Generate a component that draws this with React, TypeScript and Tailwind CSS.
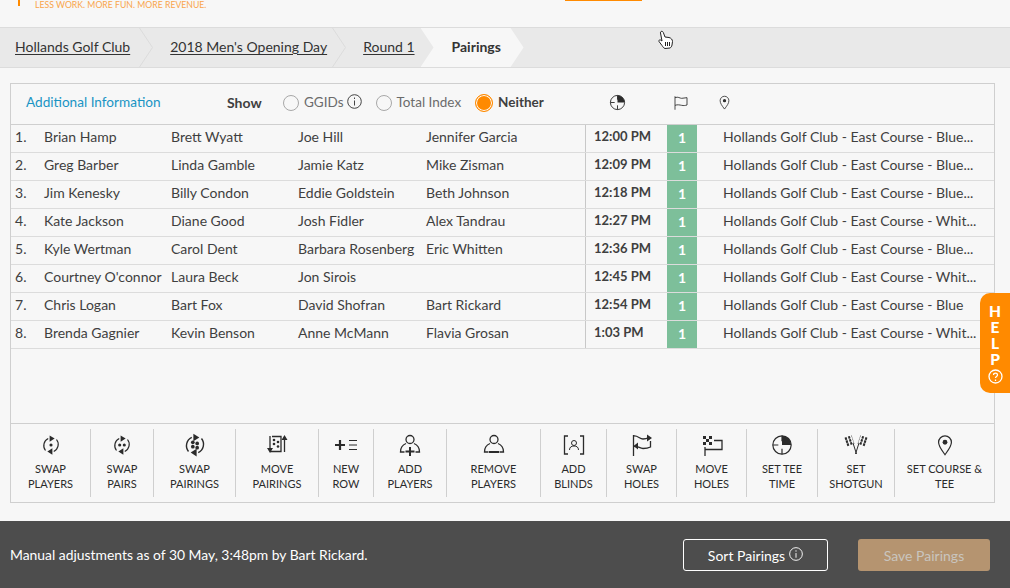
import type { ReactNode } from "react";

const rows = [
  ["Brian Hamp", "Brett Wyatt", "Joe Hill", "Jennifer Garcia", "12:00 PM", "Hollands Golf Club - East Course - Blue..."],
  ["Greg Barber", "Linda Gamble", "Jamie Katz", "Mike Zisman", "12:09 PM", "Hollands Golf Club - East Course - Blue..."],
  ["Jim Kenesky", "Billy Condon", "Eddie Goldstein", "Beth Johnson", "12:18 PM", "Hollands Golf Club - East Course - Blue..."],
  ["Kate Jackson", "Diane Good", "Josh Fidler", "Alex Tandrau", "12:27 PM", "Hollands Golf Club - East Course - Whit..."],
  ["Kyle Wertman", "Carol Dent", "Barbara Rosenberg", "Eric Whitten", "12:36 PM", "Hollands Golf Club - East Course - Blue..."],
  ["Courtney O'connor", "Laura Beck", "Jon Sirois", "", "12:45 PM", "Hollands Golf Club - East Course - Whit..."],
  ["Chris Logan", "Bart Fox", "David Shofran", "Bart Rickard", "12:54 PM", "Hollands Golf Club - East Course - Blue"],
  ["Brenda Gagnier", "Kevin Benson", "Anne McMann", "Flavia Grosan", "1:03 PM", "Hollands Golf Club - East Course - Whit..."],
];

function Svg({ children, size = 24 }: { children: ReactNode; size?: number }) {
  return (
    <svg width={size} height={size} viewBox="0 0 24 24" fill="none" stroke="#2b2b2b" strokeWidth="1.3">
      {children}
    </svg>
  );
}

function SwapIcon({ dots, size }: { dots: number[][]; size: number }) {
  return (
    <Svg size={size}>
      <path d="M9 5A8.500 8.500 0 0 0 6 18" />
      <path d="M15 19A8.500 8.500 0 0 0 18 6" />
      <path d="M10.500 1.500 16 5l-5.500 3.500Z" fill="#2b2b2b" stroke="none" />
      <path d="M13.500 15.500 8 19l5.500 3.500Z" fill="#2b2b2b" stroke="none" />
      {dots.map(([x, y], i) => (
        <circle key={i} cx={x} cy={y} r="1.700" fill="#2b2b2b" stroke="none" />
      ))}
    </Svg>
  );
}

function PieIcon({ size = 24 }: { size?: number }) {
  return (
    <Svg size={size}>
      <circle cx="12" cy="12" r="10" />
      <path d="M12 2v6M2 12h6M12 22v-6" />
      <path d="M12 2a10 10 0 0 1 10 10H12Z" fill="#2b2b2b" stroke="none" />
    </Svg>
  );
}

function PinIcon({ size = 24 }: { size?: number }) {
  return (
    <Svg size={size}>
      <path d="M12 22.500C8 17 5 13.500 5 9a7 7 0 0 1 14 0c0 4.500-3 8-7 13.500Z" />
      <circle cx="12" cy="9" r="2.600" fill="#2b2b2b" stroke="none" />
    </Svg>
  );
}

function PersonIcon({ mark }: { mark: "plus" | "minus" }) {
  return (
    <Svg>
      <circle cx="12" cy="6.500" r="4" />
      <path d="M8 10.500C4 12 2.500 15 2.500 19h4M16 10.500c4 1.500 5.500 4.500 5.500 8.500h-4" />
      {mark === "plus" ? <path d="M12 14v9M7.500 18.500h9" strokeWidth="2" /> : <path d="M7 19h10" strokeWidth="2" />}
    </Svg>
  );
}

const tools: { w: number; top: string; bottom: string; icon: ReactNode }[] = [
  { w: 80, top: "Swap", bottom: "Players", icon: <SwapIcon size={22} dots={[[12, 12]]} /> },
  { w: 63, top: "Swap", bottom: "Pairs", icon: <SwapIcon size={22} dots={[[9.500, 12], [14.500, 12]]} /> },
  { w: 82, top: "Swap", bottom: "Pairings", icon: <SwapIcon size={26} dots={[[10, 9.500], [14, 10.500], [10, 13.500], [14, 14.500]]} /> },
  {
    w: 83, top: "Move", bottom: "Pairings",
    icon: (
      <Svg>
        <path d="M7 3.500h9v15H5" />
        <path d="M5 3v15M19.500 6v13" />
        <path d="M2 15h6l-3 5ZM16.500 7h6l-3-5Z" fill="#2b2b2b" stroke="none" />
        <circle cx="9" cy="7" r="1.300" fill="#2b2b2b" stroke="none" />
        <circle cx="13" cy="9" r="1.300" fill="#2b2b2b" stroke="none" />
        <circle cx="9" cy="11" r="1.300" fill="#2b2b2b" stroke="none" />
        <circle cx="13" cy="13.500" r="1.300" fill="#2b2b2b" stroke="none" />
      </Svg>
    ),
  },
  {
    w: 55, top: "New", bottom: "Row",
    icon: (
      <Svg>
        <path d="M1 12h10M6 7v10" strokeWidth="2.200" />
        <path d="M15 7.500h8M15 12h8M15 16.500h8" strokeWidth="1" />
      </Svg>
    ),
  },
  { w: 73, top: "Add", bottom: "Players", icon: <PersonIcon mark="plus" /> },
  { w: 94, top: "Remove", bottom: "Players", icon: <PersonIcon mark="minus" /> },
  {
    w: 66, top: "Add", bottom: "Blinds",
    icon: (
      <Svg>
        <path d="M6 3H2.500v18H6M18 3h3.500v18H18" />
        <circle cx="12" cy="10" r="2.500" strokeWidth="1" />
        <path d="M7.500 17c0-3 2-4 4.500-4s4.500 1 4.500 4" strokeWidth="1" />
      </Svg>
    ),
  },
  {
    w: 70, top: "Swap", bottom: "Holes",
    icon: (
      <Svg>
        <path d="M3.500 2v21" />
        <path d="M3.500 3c4-1 6 3 9.500 3 2.500 0 4-.5 6-1.500M20.500 8v6c-2 1-5 1.500-7.500 1.500-3.500 0-5-3-9.500-2" />
        <path d="M17 1.500 22 5l-5 3.500ZM8 9.500 3.500 13 8 16.500Z" fill="#2b2b2b" stroke="none" />
      </Svg>
    ),
  },
  {
    w: 70, top: "Move", bottom: "Holes",
    icon: (
      <Svg>
        <path d="M5 14v9" />
        <path d="M14 7.500h8v9H5" />
        <path d="M3 3h3v3H3ZM9 3h3v3H9ZM3 9h3v3H3ZM9 9h3v3H9ZM6 6h3v3H6Z" fill="#2b2b2b" stroke="none" />
      </Svg>
    ),
  },
  { w: 71, top: "Set Tee", bottom: "Time", icon: <PieIcon size={22} /> },
  {
    w: 77, top: "Set", bottom: "Shotgun",
    icon: (
      <Svg>
        <path d="M9 10 12.500 21M15 10 11.500 21" strokeWidth="1" />
        <path d="M1 6 8 3.500M2 9 9 6.500M3 12 10 9.500M23 6 16 3.500M22 9 15 6.500M21 12 14 9.500" strokeWidth="2.600" strokeDasharray="2 1.500" />
      </Svg>
    ),
  },
  { w: 99, top: "Set Course &", bottom: "Tee", icon: <PinIcon size={22} /> },
];

function Crumb({ children }: { children: ReactNode }) {
  return (
    <div className="flex h-full items-center pb-[2px]">
      <a className="underline underline-offset-2 whitespace-nowrap">{children}</a>
    </div>
  );
}

function Chevron() {
  return (
    <svg width="14" height="39" viewBox="0 0 14 39" fill="none" stroke="#dcdcdc" className="shrink-0">
      <path d="M0.500 0 13.500 19.500 0.500 39" />
    </svg>
  );
}

function Radio({ label, info }: { label: string; info?: boolean }) {
  return (
    <label className="flex items-center text-[#6b6b6b]">
      <span className="w-4 h-4 mr-[5px] rounded-full border border-[#a8a8a8]" />
      {label}
      {info && (
        <svg width="15" height="15" viewBox="0 0 15 15" fill="none" stroke="#444" className="-mt-[3px] ml-[3px]">
          <circle cx="7.500" cy="7.500" r="6.800" />
          <path d="M7.500 6.500v5M7.500 3.500v1.500" />
        </svg>
      )}
    </label>
  );
}

export default function App() {
  return (
    <div className="relative h-[588px] overflow-hidden bg-[#f7f7f7] text-[14px] text-[#3f3f3f] font-['Lato','Liberation_Sans',sans-serif] flex flex-col">
      {/* header, scrolled mostly out of view */}
      <header className="relative h-[28px] shrink-0 border-b border-[#dcdcdc]">
        <span className="absolute left-[18px] top-0 w-[2px] h-[6px] bg-[#ff8a00]" />
        <span className="absolute left-[35px] -top-px text-[8.700px] leading-[12px] text-[#f9a54c] whitespace-nowrap">
          LESS WORK. MORE FUN. MORE REVENUE.
        </span>
        <span className="absolute left-[565px] top-0 w-[77px] h-px bg-[#ff8a00]" />
      </header>

      <nav className="h-[40px] shrink-0 flex items-center bg-[#e9e9e9] border-b border-[#dcdcdc] pl-[15px] text-[#333]">
        <Crumb>Hollands Golf Club</Crumb>
        <div className="ml-[9px] mr-[17px] flex"><Chevron /></div>
        <Crumb>2018 Men's Opening Day</Crumb>
        <div className="ml-[5px] mr-[17px] flex"><Chevron /></div>
        <Crumb>Round 1</Crumb>
        <div className="ml-[6px] h-full w-[103px] flex items-center pl-[31px] pb-[2px] bg-[#f7f7f7] font-bold [clip-path:polygon(0_0,calc(100%-13px)_0,100%_50%,calc(100%-13px)_100%,0_100%,13px_50%)]">
          Pairings
        </div>
      </nav>

      <main className="mt-[15px] mx-[10px] w-[985px] h-[420px] shrink-0 border border-[#cfcfcf] flex flex-col">
        <div className="h-[41px] shrink-0 flex items-center border-b border-[#cfcfcf] pl-[15px] pb-[3px] text-[13.500px]">
          <a className="w-[201px] text-[#1a94c4] text-[13.600px]">Additional Information</a>
          <span className="w-[56px] font-bold text-[14px]">Show</span>
          <div className="flex items-center gap-[14px]">
            <Radio label="GGIDs" info />
            <Radio label="Total Index" />
            <label className="flex items-center gap-[5px] font-bold">
              <span className="w-[18px] h-[18px] rounded-full border border-[#ff8a00] bg-[#ff8a00] shadow-[inset_0_0_0_1px_#fff]" />
              Neither
            </label>
          </div>
          <div className="ml-[65px] flex items-center">
            <PieIcon size={17} />
            <div className="ml-[47px]">
              <Svg size={16}>
                <path d="M3 2v20" strokeWidth="2" stroke="#777" />
                <path d="M3 4c5-2 7 1 10 1l8-1v11c-3 1-5 1-8 .5s-6-1.500-10 0" />
              </Svg>
            </div>
            <div className="ml-[28px]">
              <PinIcon size={15} />
            </div>
          </div>
        </div>

        <div className="flex-1">
          {rows.map((r, i) => (
            <div
              key={i}
              className="h-[28px] border-b border-[#dcdcdc] grid grid-cols-[29px_127px_127px_128px_159px_82px_30px_1fr] items-center pl-[4px]"
            >
              <span className="mb-[4px]">{i + 1}.</span>
              <span className="mb-[4px] whitespace-nowrap">{r[0]}</span>
              <span className="mb-[4px] whitespace-nowrap">{r[1]}</span>
              <span className="mb-[4px] whitespace-nowrap">{r[2]}</span>
              <span className="mb-[4px] whitespace-nowrap">{r[3]}</span>
              <span className="h-full flex items-center pl-[8px] pb-[3px] border-l border-[#c8c8c8] font-bold text-[13px]">{r[4]}</span>
              <span className="h-full flex items-center justify-center pb-[3px] bg-[#7dbf9a] text-white font-bold">1</span>
              <span className="mb-[4px] pl-[26px] whitespace-nowrap overflow-hidden">{r[5]}</span>
            </div>
          ))}
        </div>

        <div className="h-[79px] shrink-0 border-t border-[#cfcfcf] flex items-center">
          {tools.map((t, i) => (
            <div
              key={t.bottom + i}
              style={{ width: t.w }}
              className={
                "h-[68px] shrink-0 flex flex-col items-center text-[11px] leading-[15px] uppercase text-[#2b2b2b] " +
                (i < tools.length - 1 ? "border-r border-[#cfcfcf]" : "")
              }
            >
              <div className="h-[32px] flex items-center justify-center">{t.icon}</div>
              <span className="whitespace-nowrap">{t.top}</span>
              <span className="whitespace-nowrap">{t.bottom}</span>
            </div>
          ))}
        </div>
      </main>

      <footer className="mt-[18px] flex-1 bg-[#4d4d4d] flex items-center pl-[10px] pr-[20px] text-white">
        <span className="text-[13.900px] pt-[1px]">Manual adjustments as of 30 May, 3:48pm by Bart Rickard.</span>
        <button className="ml-auto w-[145px] h-[32px] border border-white rounded-[3px] flex items-center justify-center gap-[4px] pt-[1px]">
          Sort Pairings
          <svg width="14" height="14" viewBox="0 0 15 15" fill="none" stroke="#fff" className="-mt-[2px]">
            <circle cx="7.500" cy="7.500" r="6.800" />
            <path d="M7.500 6.500v5M7.500 3.500v1.500" />
          </svg>
        </button>
        <button className="ml-[30px] w-[132px] h-[32px] rounded-[3px] bg-[#b59470] text-[#c9c5bf] pt-[1px]">
          Save Pairings
        </button>
      </footer>

      {/* floating help tab */}
      <div className="absolute right-0 top-[293px] w-[30px] h-[100px] rounded-l-[10px] bg-[#ff8a00] flex flex-col items-center pt-[10px] text-white font-black text-[15.500px] leading-[16px]">
        <span>H</span>
        <span>E</span>
        <span>L</span>
        <span>P</span>
        <svg width="15" height="15" viewBox="0 0 15 15" fill="none" stroke="#fff" strokeWidth="1.300" className="mt-[2px]">
          <circle cx="7.500" cy="7.500" r="6.500" />
          <path d="M5.500 6c0-2.500 4-2.500 4 0 0 1.500-2 1.500-2 3M7.500 10.500v1.500" />
        </svg>
      </div>

      {/* mouse pointer caught in the shot */}
      <svg width="16" height="20" viewBox="0 0 16 20" className="absolute left-[658px] top-[30px]" fill="#fff" stroke="#222" strokeWidth="1">
        <path d="M3 1.500c1-.5 2 0 2.300 1L7 7l4 .5c2 .5 3.500 2 3.500 4l-.5 3.500c-.3 1.500-1 2.500-2 3l-5 .5c-1.500-.5-2-1.500-3-3L1 11.500c-.5-1 .5-2 1.500-1.500L4 11 2.500 3c-.1-.7 0-1.200.5-1.500Z" />
        <path d="M7.500 12v4M9.500 12v4M11.500 12v4" />
      </svg>
    </div>
  );
}
